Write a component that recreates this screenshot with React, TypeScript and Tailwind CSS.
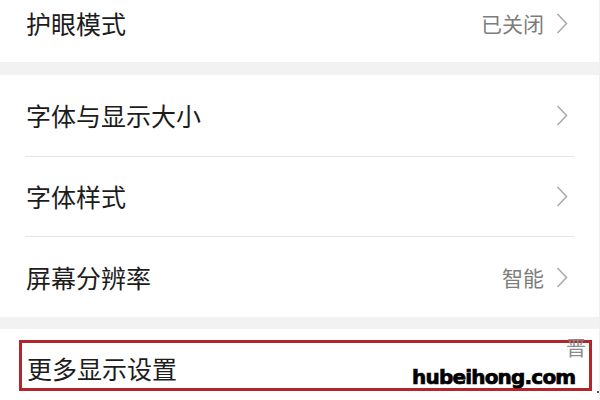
import React from "react";

const font = { fontFamily: '"Noto Sans CJK SC", "Noto Sans", sans-serif' };

function Chevron() {
  return (
    <svg width="12" height="21" viewBox="0 0 12 21" className="shrink-0">
      <polyline points="1.5,1 10.5,10.5 1.5,20" fill="none" stroke="#ababab" strokeWidth="1.6" strokeLinejoin="miter" />
    </svg>
  );
}

function Row({ label, value, className }: { label: string; value?: string; className?: string }) {
  return (
    <div className={"flex items-center justify-between pl-[26px] pr-[31px] " + (className ?? "")}>
      <span className="text-[25px] text-[#1c1c1c] leading-none">{label}</span>
      <div className="flex items-center gap-[12px]">
        {value && <span className="text-[21px] text-[#7d7d7d] leading-none">{value}</span>}
        <Chevron />
      </div>
    </div>
  );
}

export default function App() {
  return (
    <div className="w-[600px] h-[400px] overflow-hidden bg-white relative border-r border-[#f0f0f0]" style={font}>
      <Row label="护眼模式" value="已关闭" className="h-[46px] mb-[16px]" />
      <div className="h-[13px] bg-[#f2f2f2]" />
      <Row label="字体与显示大小" className="h-[81px]" />
      <div className="mx-[25px] h-px bg-[#e3e3e3]" />
      <Row label="字体样式" className="h-[79px]" />
      <div className="mx-[25px] h-px bg-[#e3e3e3]" />
      <Row label="屏幕分辨率" value="智能" className="h-[80px]" />
      <div className="h-[12px] bg-[#f2f2f2]" />
      <div className="relative h-[80px] flex items-center pl-[27px] pb-[2px]">
        <span className="text-[25px] text-[#1c1c1c] leading-none">更多显示设置</span>
        <div className="absolute left-[19px] top-[11px] w-[573px] h-[51px] border-[3px] border-[#b2262b]" />
        <span className="absolute left-[566px] top-[9px] text-[20px] leading-none text-[#8c8c8c]">晋</span>
        <span
          className="absolute left-[412px] top-[38px] text-[20px] font-bold leading-none text-black tracking-[-0.8px]"
          style={{ fontFamily: '"DejaVu Sans", sans-serif', WebkitTextStroke: "0.7px black" }}
        >
          hubeihong.com
        </span>
        <div className="absolute left-[597px] top-[62px] w-[2px] h-[2px] bg-[#555]" />
      </div>
    </div>
  );
}
